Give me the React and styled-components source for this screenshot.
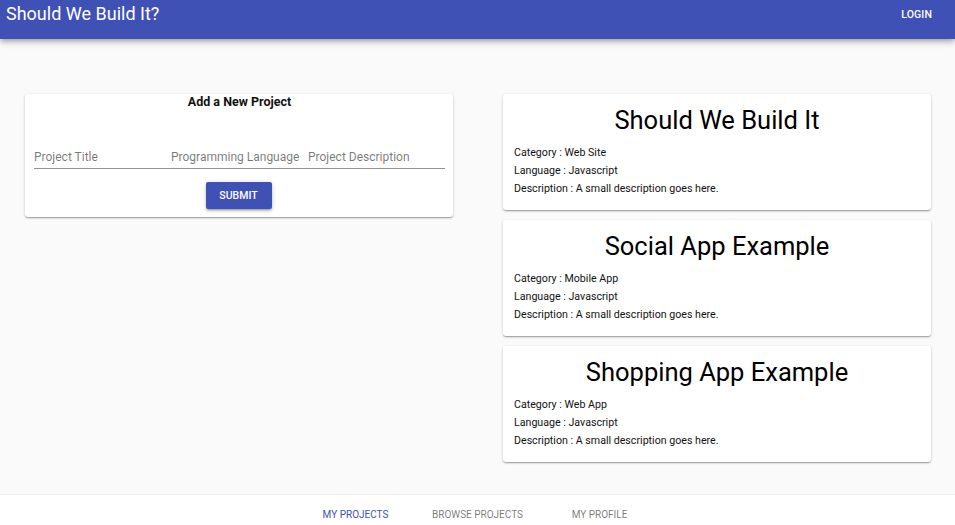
import styled, { createGlobalStyle } from "styled-components";

const GlobalStyle = createGlobalStyle`
  html, body {
    margin: 0;
    padding: 0;
    background: #fafafa;
    font-family: Roboto, "Liberation Sans", Arial, sans-serif;
    color: rgba(0, 0, 0, 0.87);
  }
  * {
    box-sizing: border-box;
  }
`;

const AppBar = styled.header`
  height: 39px;
  background: #3f51b5;
  color: #fff;
  display: flex;
  align-items: flex-start;
  justify-content: space-between;
  padding: 0 23px 0 6px;
  box-shadow: 0 2px 4px -1px rgba(0, 0, 0, 0.2), 0 4px 5px 0 rgba(0, 0, 0, 0.14),
    0 1px 10px 0 rgba(0, 0, 0, 0.12);
  position: relative;
  z-index: 2;
`;

const Brand = styled.h1`
  margin: 0;
  height: 28px;
  line-height: 28px;
  font-size: 18px;
  font-weight: 400;
`;

const TextButton = styled.button`
  border: 0;
  background: none;
  color: #fff;
  height: 28px;
  padding: 0;
  font-family: inherit;
  font-size: 10.5px;
  font-weight: 500;
  letter-spacing: 0.1px;
  text-transform: uppercase;
  cursor: pointer;
`;

const Main = styled.main`
  display: grid;
  grid-template-columns: 1fr 1fr;
  column-gap: 50px;
  align-items: start;
  padding: 55px 24px 0 25px;
`;

const Column = styled.div`
  display: flex;
  flex-direction: column;
  gap: 10px;
`;

const Paper = styled.section`
  background: #fff;
  border-radius: 3px;
  box-shadow: 0 1px 3px 0 rgba(0, 0, 0, 0.2), 0 1px 1px 0 rgba(0, 0, 0, 0.14),
    0 2px 1px -1px rgba(0, 0, 0, 0.12);
`;

const FormCard = styled(Paper)`
  display: flex;
  flex-direction: column;
  align-items: center;
  padding: 0 8px 8px 9px;
`;

const FormTitle = styled.h2`
  margin: 0;
  line-height: 16px;
  font-size: 12.5px;
  font-weight: 700;
  color: #111;
`;

const FieldRow = styled.div`
  display: grid;
  grid-template-columns: repeat(3, 1fr);
  width: 100%;
  margin-top: 38px;
  border-bottom: 1px solid rgba(0, 0, 0, 0.42);
`;

const Input = styled.input`
  border: 0;
  outline: none;
  background: none;
  width: 100%;
  height: 20px;
  padding: 0 0 2px;
  font-family: inherit;
  font-size: 12px;
  color: rgba(0, 0, 0, 0.87);

  &::placeholder {
    color: rgba(0, 0, 0, 0.54);
  }
`;

const SubmitButton = styled.button`
  margin-top: 13px;
  margin-right: 2px;
  width: 66px;
  height: 27px;
  border: 0;
  border-radius: 2px;
  background: #3f51b5;
  color: #fff;
  font-family: inherit;
  font-size: 10.5px;
  font-weight: 500;
  text-transform: uppercase;
  cursor: pointer;
  box-shadow: 0 1px 5px 0 rgba(0, 0, 0, 0.2), 0 2px 2px 0 rgba(0, 0, 0, 0.14),
    0 3px 1px -2px rgba(0, 0, 0, 0.12);
`;

const ProjectCard = styled(Paper)`
  padding: 10px 11px 12px;
`;

const ProjectTitle = styled.h3`
  margin: 0 0 8px;
  text-align: center;
  font-size: 25.5px;
  line-height: 32px;
  font-weight: 400;
  color: #000;
`;

const Detail = styled.p`
  margin: 0;
  font-size: 10.65px;
  line-height: 18px;
  color: #111;
`;

const BottomNav = styled.nav`
  margin-top: 32px;
  height: 56px;
  background: #fff;
  border-top: 1px solid #ececec;
  display: flex;
  justify-content: center;
  align-items: flex-start;
`;

const NavAction = styled.button`
  width: 122px;
  border: 0;
  background: none;
  padding: 14px 0 0;
  font-family: inherit;
  font-size: 10px;
  line-height: 12px;
  text-transform: uppercase;
  color: ${(p) => (p.$active ? "#3f51b5" : "rgba(0, 0, 0, 0.54)")};
  cursor: pointer;
`;

const projects = [
  { title: "Should We Build It", category: "Web Site" },
  { title: "Social App Example", category: "Mobile App" },
  { title: "Shopping App Example", category: "Web App" },
];

export default function App() {
  return (
    <>
      <GlobalStyle />
      <AppBar>
        <Brand>Should We Build It?</Brand>
        <TextButton>Login</TextButton>
      </AppBar>
      <Main>
        <Column>
          <FormCard>
            <FormTitle>Add a New Project</FormTitle>
            <FieldRow>
              <Input placeholder="Project Title" />
              <Input placeholder="Programming Language" />
              <Input placeholder="Project Description" />
            </FieldRow>
            <SubmitButton>Submit</SubmitButton>
          </FormCard>
        </Column>
        <Column>
          {projects.map((p) => (
            <ProjectCard key={p.title}>
              <ProjectTitle>{p.title}</ProjectTitle>
              <Detail>Category : {p.category}</Detail>
              <Detail>Language : Javascript</Detail>
              <Detail>Description : A small description goes here.</Detail>
            </ProjectCard>
          ))}
        </Column>
      </Main>
      <BottomNav>
        <NavAction $active>My Projects</NavAction>
        <NavAction>Browse Projects</NavAction>
        <NavAction>My Profile</NavAction>
      </BottomNav>
    </>
  );
}
